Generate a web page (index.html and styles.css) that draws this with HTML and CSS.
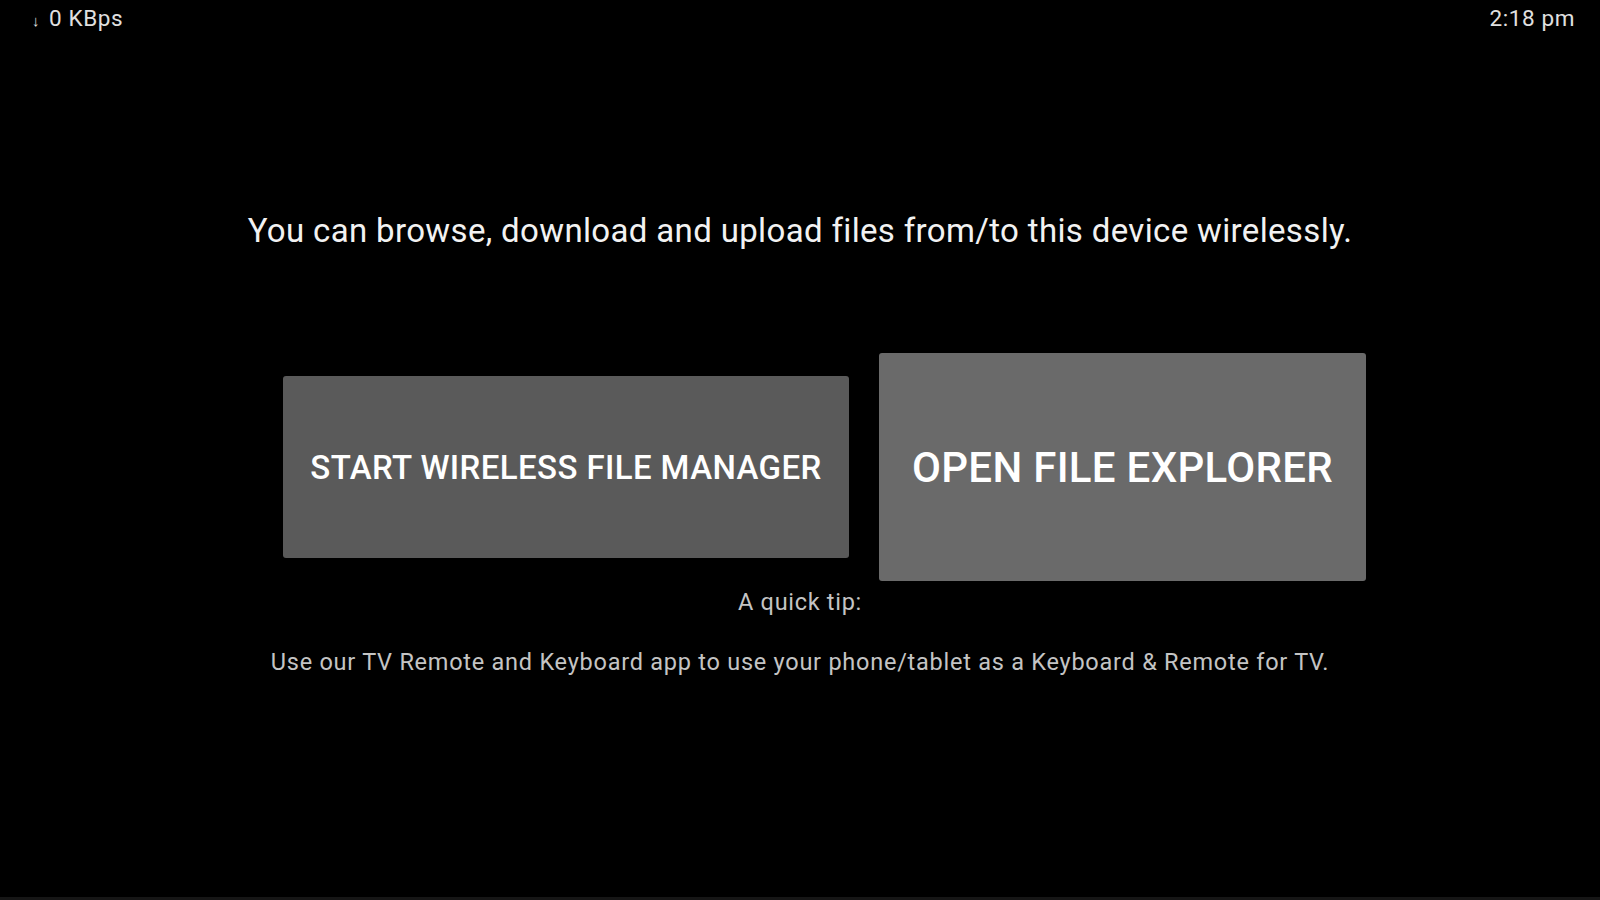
FILE: index.html
```html
<!DOCTYPE html>
<html>
<head>
<meta charset="utf-8">
<link rel="stylesheet" href="styles.css">
</head>
<body>
<div class="screen">
  <div class="statusbar">
    <span class="speed"><span class="arrow">↓</span>0 KBps</span>
    <span class="clock">2:18 pm</span>
  </div>
  <main class="content">
    <p class="intro">You can browse, download and upload files from/to this device wirelessly.</p>
    <div class="actions">
      <div class="btn btn-start">START WIRELESS FILE MANAGER</div>
      <div class="btn btn-open">OPEN FILE EXPLORER</div>
    </div>
    <p class="tip-title">A quick tip:</p>
    <p class="tip-text">Use our TV Remote and Keyboard app to use your phone/tablet as a Keyboard &amp; Remote for TV.</p>
  </main>
</div>
</body>
</html>
```

FILE: styles.css
```css
html, body {
  margin: 0;
  padding: 0;
  background: #000;
}
.screen {
  width: 1600px;
  height: 900px;
  background: #000;
  color: #fff;
  font-family: Roboto, "Noto Sans", sans-serif;
  overflow: hidden;
  display: flex;
  flex-direction: column;
  border-bottom: 3px solid #161616;
  box-sizing: border-box;
}
.statusbar {
  display: flex;
  justify-content: space-between;
  align-items: center;
  height: 36px;
  padding: 0 25px 0 32px;
  font-size: 22.5px;
  letter-spacing: 0.6px;
  color: #e0e0e0;
}
.arrow {
  display: inline-block;
  font-size: 15px;
  width: 17px;
}
.content {
  display: flex;
  flex-direction: column;
  align-items: center;
  padding-top: 175px;
}
.intro {
  margin: 0;
  font-size: 33px;
  line-height: 40px;
  letter-spacing: 0.35px;
  color: #f2f2f2;
}
.actions {
  display: flex;
  align-items: center;
  justify-content: center;
  gap: 30px;
  align-self: stretch;
  padding-left: 49px;
  margin-top: 102px;
}
.btn {
  display: flex;
  align-items: center;
  justify-content: center;
  border-radius: 3px;
  color: #fff;
  font-weight: 500;
}
.btn-start {
  width: 566px;
  height: 182px;
  background: #5a5a5a;
  font-size: 33px;
  letter-spacing: 0.4px;
}
.btn-open {
  width: 487px;
  height: 228px;
  background: #6a6a6a;
  font-size: 42px;
  letter-spacing: 0.3px;
}
.tip-title {
  margin: 7px 0 0;
  font-size: 23.5px;
  line-height: 28px;
  letter-spacing: 0.7px;
  color: #c4c4c4;
}
.tip-text {
  margin: 32px 0 0;
  font-size: 23.5px;
  line-height: 28px;
  letter-spacing: 0.75px;
  color: #c4c4c4;
}
```
